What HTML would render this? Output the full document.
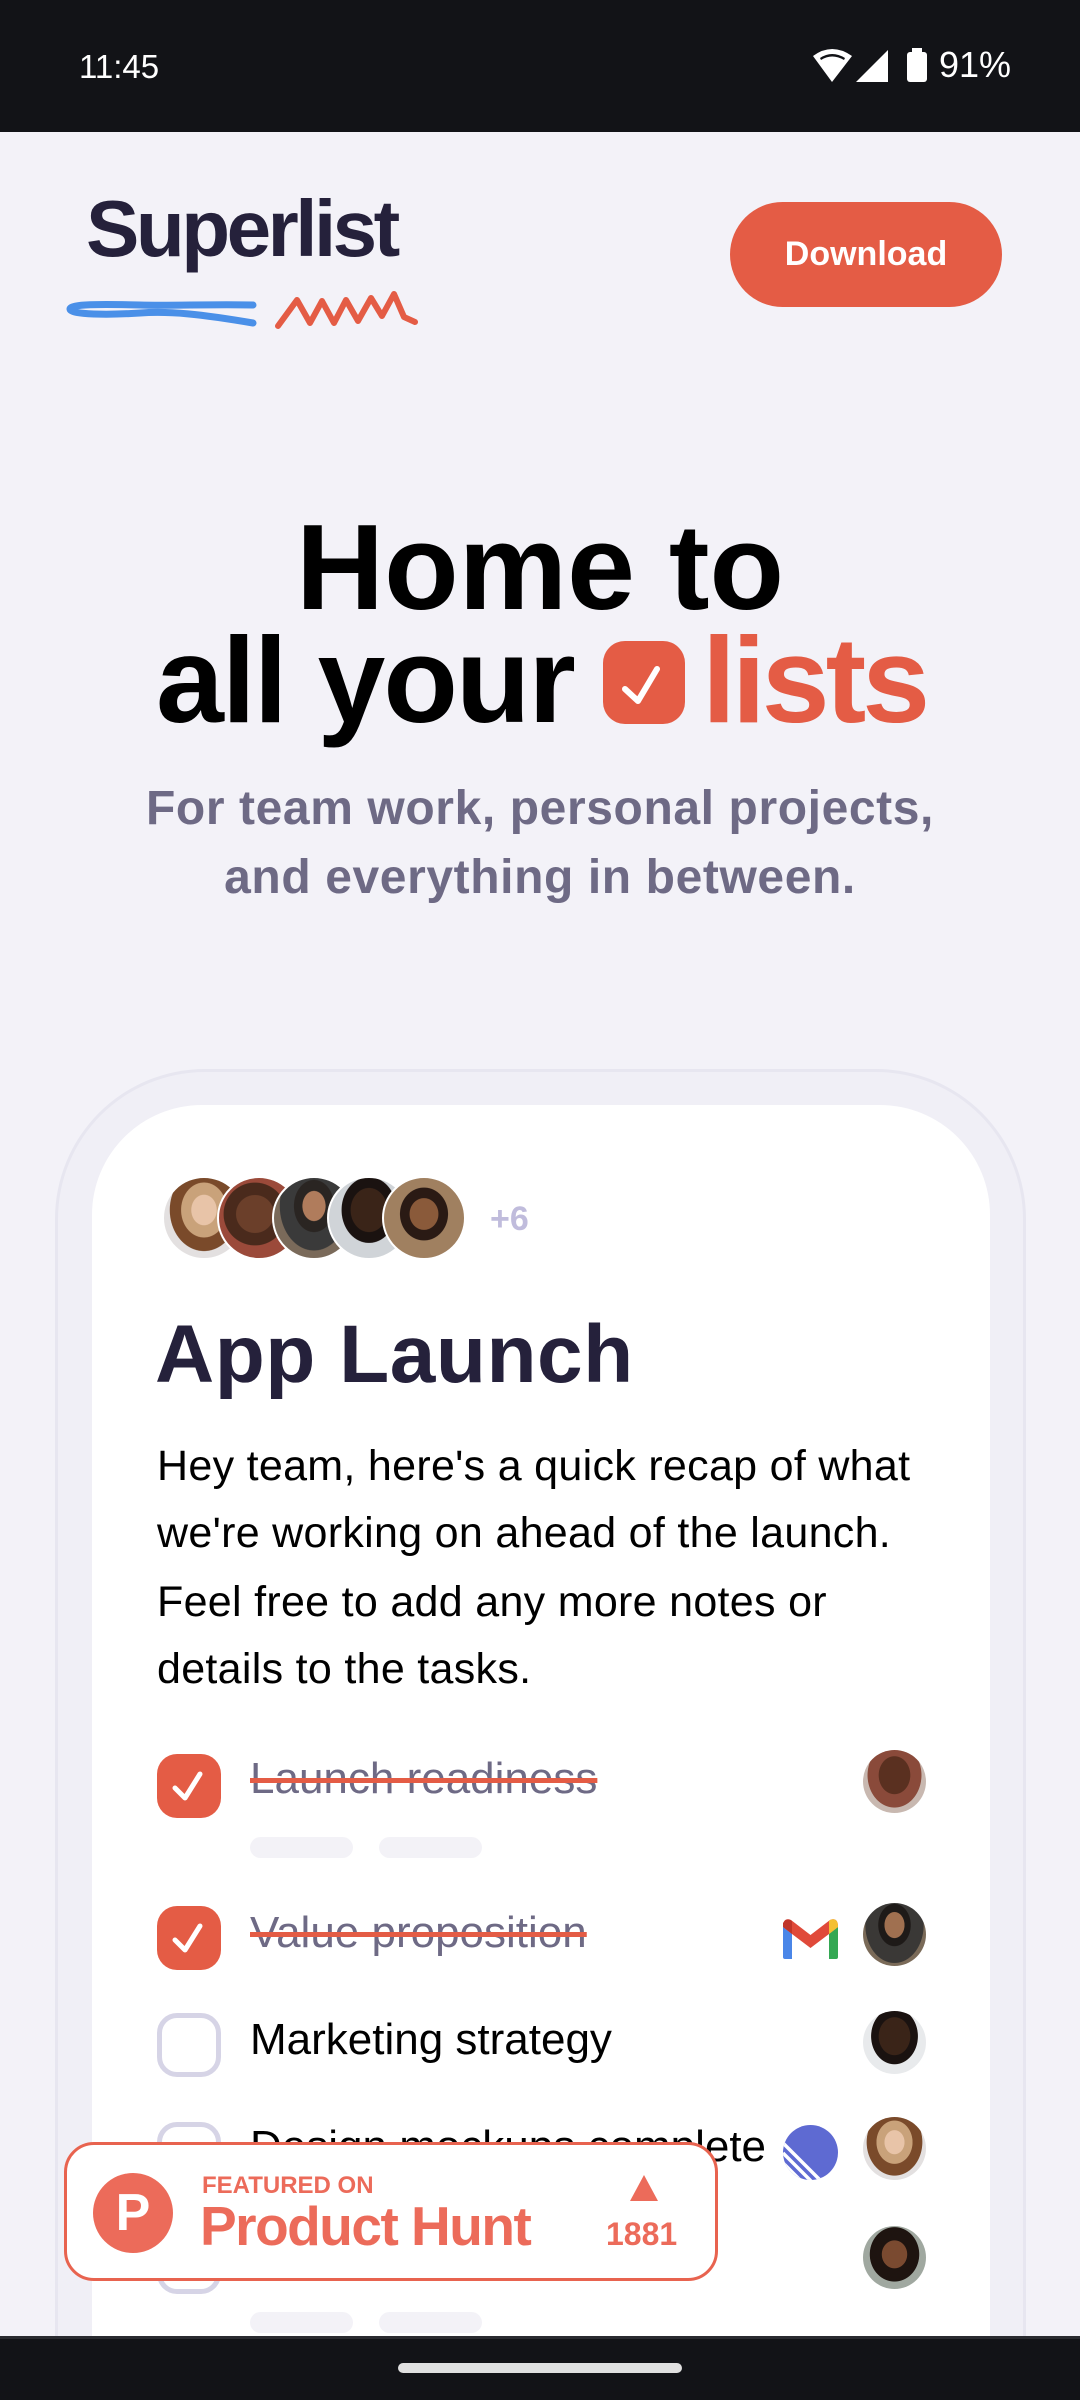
<!DOCTYPE html>
<html><head><meta charset="utf-8">
<style>
*{margin:0;padding:0;box-sizing:border-box}
html,body{width:1080px;height:2400px;overflow:hidden;background:#f3f2f8;font-family:"Liberation Sans",sans-serif;position:relative}
.a{position:absolute;white-space:nowrap}
.av{position:absolute;border-radius:50%;overflow:hidden}
.cb{position:absolute;left:157px;width:64px;height:64px;border-radius:20px}
.done{background:#e45c45}
.open{border:5px solid #d6d4e6;background:#fff}
.row{position:absolute;left:250px;font-size:44px;line-height:44px;white-space:nowrap}
.strike{color:#6e6a85;text-decoration:line-through;text-decoration-color:#e45c45;text-decoration-thickness:5px}
.pill{position:absolute;height:21px;width:103px;border-radius:11px;background:#f3f2f7}
.bt{position:absolute;left:157px;font-size:43px;line-height:43px;color:#000;letter-spacing:0.3px;white-space:nowrap}
</style></head><body>
<!-- status bar -->
<div class="a" style="left:0;top:0;width:1080px;height:132px;background:#121317"></div>
<div class="a" style="left:79px;top:50px;font-size:33px;line-height:33px;color:#fff">11:45</div>
<svg class="a" style="left:810px;top:46px" width="200" height="40" viewBox="0 0 200 40">
 <path d="M3,10 Q22,-4 42,10 L22,36 Z" fill="#fff"/>
 <path d="M10,12 Q22,4 35,12 L34,14 Q22,7 11,14 Z" fill="#121317"/>
 <path d="M46,36 L78,4 L78,36 Z" fill="#fff"/>
 <rect x="97" y="6" width="20" height="30" rx="3" fill="#fff"/><rect x="102" y="2" width="10" height="5" fill="#fff"/>
</svg>
<div class="a" style="left:939px;top:47px;font-size:36px;line-height:36px;color:#fff">91%</div>

<!-- header -->
<div class="a" style="left:86px;top:189px;font-size:80px;line-height:80px;font-weight:bold;color:#25213b;letter-spacing:-3.5px">Superlist</div>
<svg class="a" style="left:60px;top:180px" width="400" height="160" viewBox="0 0 400 160">
 <path d="M193,125 C150,124 110,126 80,125 C40,124 10,124 10,129 C10,135 50,135 80,133 C110,131 140,134 193,143" fill="none" stroke="#4a90e8" stroke-width="7" stroke-linecap="round"/>
 <path d="M218,146 L237,120 L250,143 L262,121 L274,143 L286,120 L298,141 L311,118 L322,136 L334,114 L344,137 L355,142" fill="none" stroke="#e45c45" stroke-width="6" stroke-linecap="round" stroke-linejoin="round"/>
</svg>
<div class="a" style="left:730px;top:202px;width:272px;height:105px;border-radius:53px;background:#e45c45;color:#fff;font-size:34px;font-weight:bold;text-align:center;line-height:105px">Download</div>

<!-- hero -->
<div class="a" style="left:0;width:1080px;text-align:center;top:506px;font-size:122px;line-height:122px;font-weight:bold;color:#000;letter-spacing:0px">Home to</div>
<div class="a" style="left:156px;top:619px;font-size:122px;line-height:122px;font-weight:bold;color:#000;letter-spacing:-2px">all your</div>
<div class="a" style="left:603px;top:641px;width:82px;height:83px;border-radius:22px;background:#e45c45"></div>
<svg class="a" style="left:603px;top:641px" width="82" height="83" viewBox="0 0 82 83"><path d="M22,48 L35,60 L54,28" fill="none" stroke="#fff" stroke-width="6" stroke-linecap="round" stroke-linejoin="round"/></svg>
<div class="a" style="left:702px;top:619px;font-size:122px;line-height:122px;font-weight:bold;color:#e45c45;letter-spacing:-4px">lists</div>
<div class="a" style="left:0;width:1080px;text-align:center;top:785px;font-size:48px;line-height:48px;font-weight:bold;color:#6e6a85;letter-spacing:0.6px">For team work, personal projects,</div>
<div class="a" style="left:0;width:1080px;text-align:center;top:854px;font-size:48px;line-height:48px;font-weight:bold;color:#6e6a85;letter-spacing:0.6px">and everything in between.</div>

<!-- frames -->
<div class="a" style="left:55px;top:1069px;width:971px;height:1331px;border:3px solid #e7e6f0;border-bottom:none;border-radius:150px 150px 0 0;background:#f0eff6"></div>
<div class="a" style="left:92px;top:1105px;width:898px;height:1295px;border-radius:110px 110px 0 0;background:#fff"></div>

<!-- avatars -->
<div class="av" style="left:162px;top:1176px;width:84px;height:84px;border:2px solid #fff;background:radial-gradient(ellipse at 50% 40%,#e8c4a8 0 22%,#c9a27a 23% 40%,#7a4a2a 41% 60%,#e3e0e0 61%)"></div>
<div class="av" style="left:217px;top:1176px;width:84px;height:84px;border:2px solid #fff;background:radial-gradient(ellipse at 45% 45%,#6b3f2a 0 30%,#4a2a1c 31% 50%,#9b4a3a 51%)"></div>
<div class="av" style="left:272px;top:1176px;width:84px;height:84px;border:2px solid #fff;background:radial-gradient(ellipse at 50% 35%,#b07c5c 0 20%,#2a2522 21% 35%,#3a3a3a 36% 60%,#7a6a5a 61%)"></div>
<div class="av" style="left:327px;top:1176px;width:84px;height:84px;border:2px solid #fff;background:radial-gradient(ellipse at 50% 40%,#3a2418 0 32%,#1a1210 33% 48%,#d0d4d8 49%)"></div>
<div class="av" style="left:382px;top:1176px;width:84px;height:84px;border:2px solid #fff;background:radial-gradient(ellipse at 50% 45%,#8a5a3a 0 25%,#2a1a14 26% 42%,#a08060 43%)"></div>
<div class="a" style="left:490px;top:1202px;font-size:34px;line-height:34px;font-weight:bold;color:#c0bcdc">+6</div>

<div class="a" style="left:155px;top:1314px;font-size:82px;line-height:82px;font-weight:bold;color:#25213b;letter-spacing:0.5px">App Launch</div>
<div class="bt" style="top:1445px">Hey team, here's a quick recap of what</div>
<div class="bt" style="top:1512px">we're working on ahead of the launch.</div>
<div class="bt" style="top:1581px">Feel free to add any more notes or</div>
<div class="bt" style="top:1648px">details to the tasks.</div>

<!-- rows -->
<div class="cb done" style="top:1754px"></div>
<svg class="a" style="left:157px;top:1754px" width="64" height="64"><path d="M18,34 L28,44 L43,20" fill="none" stroke="#fff" stroke-width="5" stroke-linecap="round" stroke-linejoin="round"/></svg>
<div class="row strike" style="top:1757px">Launch readiness</div>
<div class="pill" style="left:250px;top:1837px"></div><div class="pill" style="left:379px;top:1837px"></div>
<div class="av" style="left:863px;top:1750px;width:63px;height:63px;background:radial-gradient(ellipse at 50% 40%,#5a3020 0 35%,#8a4a3a 36% 60%,#c8b8b0 61%)"></div>

<div class="cb done" style="top:1906px"></div>
<svg class="a" style="left:157px;top:1906px" width="64" height="64"><path d="M18,34 L28,44 L43,20" fill="none" stroke="#fff" stroke-width="5" stroke-linecap="round" stroke-linejoin="round"/></svg>
<div class="row strike" style="top:1911px">Value proposition</div>
<svg class="a" style="left:783px;top:1917px" width="55" height="42" viewBox="0 0 55 42">
 <path d="M0,10 L0,40 Q0,42 2,42 L9,42 L9,17 Z" fill="#4a86e8"/>
 <path d="M55,10 L55,40 Q55,42 53,42 L46,42 L46,17 Z" fill="#34a853"/>
 <path d="M0,10 Q0,0 8,3 L27.5,18 L47,3 Q55,0 55,10 L46,17 L27.5,31 L9,17 Z" fill="#e04a3a"/>
 <path d="M46,17 L55,10 Q55,0 47,3 L46,4 Z" fill="#f4c032"/>
 <path d="M0,10 L9,17 L9,4 Q4,0 0,6 Z" fill="#c0352a"/>
</svg>
<div class="av" style="left:863px;top:1903px;width:63px;height:63px;background:radial-gradient(ellipse at 50% 35%,#a07050 0 22%,#1e1a18 23% 36%,#3a3836 37% 65%,#7a6a58 66%)"></div>

<div class="cb open" style="top:2013px"></div>
<div class="row" style="top:2018px;color:#000">Marketing strategy</div>
<div class="av" style="left:863px;top:2011px;width:63px;height:63px;background:radial-gradient(ellipse at 50% 40%,#3a2418 0 35%,#1a1210 36% 52%,#e8eaec 53%)"></div>

<div class="cb open" style="top:2122px"></div>
<div class="row" style="top:2125px;color:#000">Design mockups complete</div>
<svg class="a" style="left:783px;top:2125px" width="55" height="55" viewBox="0 0 55 55">
 <defs><clipPath id="c"><circle cx="27.5" cy="27.5" r="27.5"/></clipPath></defs>
 <circle cx="27.5" cy="27.5" r="27.5" fill="#5e6ad2"/>
 <g clip-path="url(#c)" stroke="#fff" stroke-width="3.5"><line x1="0" y1="18" x2="38" y2="56"/><line x1="0" y1="28" x2="28" y2="56"/><line x1="0" y1="38" x2="18" y2="56"/></g>
</svg>
<div class="av" style="left:863px;top:2117px;width:63px;height:63px;background:radial-gradient(ellipse at 50% 40%,#e8c4a8 0 22%,#c9a27a 23% 40%,#7a4a2a 41% 62%,#e3e0e0 63%)"></div>

<div class="cb open" style="top:2230px"></div>
<div class="av" style="left:863px;top:2226px;width:63px;height:63px;background:radial-gradient(ellipse at 50% 45%,#7a4a30 0 28%,#1e1410 29% 55%,#a0a8a0 56%)"></div>
<div class="pill" style="left:250px;top:2312px"></div><div class="pill" style="left:379px;top:2312px"></div>

<!-- product hunt badge -->
<div class="a" style="left:64px;top:2142px;width:654px;height:139px;border:3px solid #e8634f;border-radius:30px;background:#fff"></div>
<div class="a" style="left:93px;top:2173px;width:80px;height:80px;border-radius:50%;background:#ec6b5a;color:#fff;font-size:52px;font-weight:bold;line-height:80px;text-align:center">P</div>
<div class="a" style="left:202px;top:2174px;font-size:24px;line-height:24px;font-weight:bold;color:#ec6b5a">FEATURED ON</div>
<div class="a" style="left:200px;top:2199px;font-size:55px;line-height:55px;font-weight:bold;color:#ec6b5a;letter-spacing:-1.5px">Product Hunt</div>
<svg class="a" style="left:630px;top:2175px" width="28" height="26"><path d="M14,0 L28,26 L0,26 Z" fill="#ec6b5a"/></svg>
<div class="a" style="left:606px;top:2218px;font-size:32px;line-height:32px;font-weight:bold;color:#ec6b5a">1881</div>

<!-- nav bar -->
<div class="a" style="left:0;top:2336px;width:1080px;height:64px;background:#121317;border-top:3px solid #2a2b30"></div>
<div class="a" style="left:398px;top:2363px;width:284px;height:10px;border-radius:5px;background:#e0e0e0"></div>
</body></html>
